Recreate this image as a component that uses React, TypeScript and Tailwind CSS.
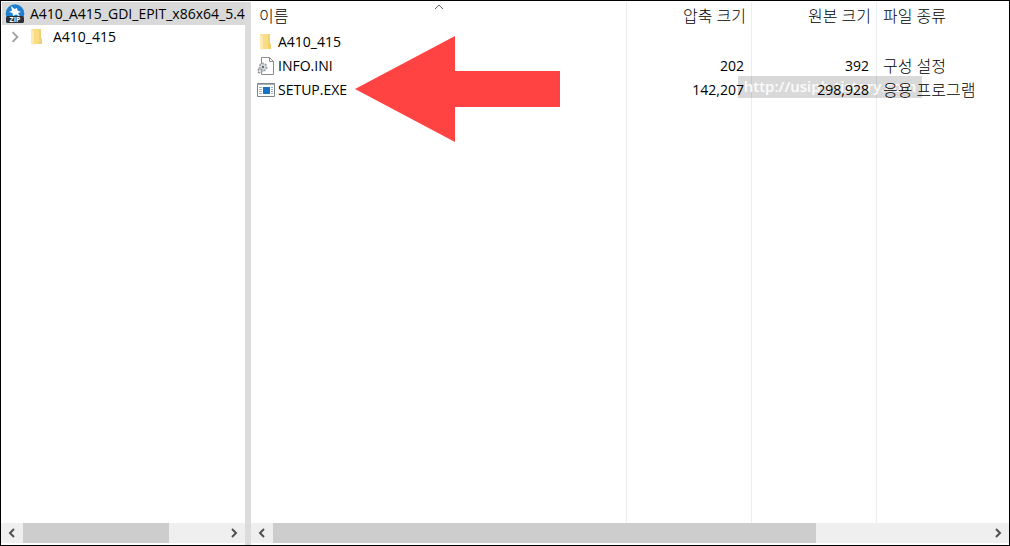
import { ReactNode } from "react";

type Entry = {
  name: string;
  packed: string;
  size: string;
  kind: string;
  icon: ReactNode;
};

function ZipIcon() {
  return (
    <svg width="20" height="20" viewBox="0 0 20 20" className="shrink-0">
      <circle cx="10" cy="9.5" r="9.3" fill="#1c7fd0" />
      <path d="M6 2l3.500 3L12 4l.5 2.500L16 8l-3 1 2 3.500-4-2L8 12l-.5-3L4 8l3-1.500z" fill="#fff" />
      <path d="M2 12h16l1 2v4l-1 1H2l-1-1v-4z" fill="#2b3036" />
      <text x="10" y="18" textAnchor="middle" fontSize="7" fontWeight="700" fill="#fff">ZIP</text>
    </svg>
  );
}

function FolderIcon() {
  return (
    <svg width="16" height="18" viewBox="0 0 16 18" className="shrink-0">
      <path d="M2 1h9v15H2z" fill="#f9dc86" />
      <path d="M2 1l3 2v14l-3-1z" fill="#fdeab0" />
      <path d="M10 1h2v9l1 1v5h-3z" fill="#f3d172" />
    </svg>
  );
}

function IniIcon() {
  return (
    <svg width="18" height="18" viewBox="0 0 18 18" className="shrink-0">
      <path d="M4.500 .5h8l4 4v13h-12z" fill="#fff" stroke="#8b8b8b" />
      <path d="M12.500 .5v4h4" fill="none" stroke="#8b8b8b" />
      <circle cx="6" cy="10" r="3.500" fill="#dfe3e6" stroke="#a0a6ab" strokeWidth="2" strokeDasharray="2 1" />
      <circle cx="3" cy="14" r="2" fill="#dfe3e6" stroke="#8d949a" strokeWidth="1.500" strokeDasharray="2 1" />
      <circle cx="6" cy="10" r="1.200" fill="#666" />
    </svg>
  );
}

function ExeIcon() {
  return (
    <svg width="18" height="14" viewBox="0 0 18 14" className="shrink-0">
      <path d="M.5 .5h17v13H.5z" fill="#fff" stroke="#7d8489" />
      <path d="M1 1h16v1H1z" fill="#a9b2b8" />
      <path d="M6 4h7v7H6z" fill="#1673c4" />
      <path d="M2 4.500h3M2 6.500h3M2 8.500h3M2 10.500h3M14 4.500h2M14 6.500h2M14 8.500h2M14 10.500h2" stroke="#9fb3c2" />
    </svg>
  );
}

function Chevron({ d, className }: { d: string; className: string }) {
  return (
    <svg viewBox="0 0 10 10" fill="none" stroke="currentColor" className={className}>
      <path d={d} />
    </svg>
  );
}

const LEFT = "M7 1L3 5l4 4";
const RIGHT = "M3 1l4 4-4 4";

function ScrollBar({ thumb }: { thumb: string }) {
  return (
    <div className="mb-[2px] flex h-5 shrink-0 bg-[#efefef] text-[#505050]">
      <button aria-label="Scroll left" className="flex w-[22px] items-center justify-center">
        <Chevron d={LEFT} className="size-[10px] stroke-2" />
      </button>
      <div className="flex-1">
        <div className={`h-full bg-[#cdcdcd] ${thumb}`} />
      </div>
      <button aria-label="Scroll right" className="flex w-[22px] items-center justify-center">
        <Chevron d={RIGHT} className="size-[10px] stroke-2" />
      </button>
    </div>
  );
}

const entries: Entry[] = [
  { name: "A410_415", packed: "", size: "", kind: "", icon: <FolderIcon /> },
  { name: "INFO.INI", packed: "202", size: "392", kind: "구성 설정", icon: <IniIcon /> },
  { name: "SETUP.EXE", packed: "142,207", size: "298,928", kind: "응용 프로그램", icon: <ExeIcon /> },
];

export default function App() {
  return (
    <div className="relative flex h-screen overflow-hidden border border-black bg-white pt-px font-['Open_Sans','Noto_Sans_CJK_KR',sans-serif] text-sm text-black">
      {/* TREE */}
      <aside className="flex w-[244px] shrink-0 flex-col overflow-hidden">
        <div className="ml-px flex h-[23px] shrink-0 items-center gap-[5px] whitespace-nowrap bg-[#d9d9d9] pl-[3px]">
          <ZipIcon />
          <span>A410_A415_GDI_EPIT_x86x64_5.4</span>
        </div>
        <div className="flex h-6 items-center pl-2">
          <button aria-label="Expand" className="mr-2 text-[#a0a0a0]">
            <Chevron d={RIGHT} className="size-3 stroke-[1.5]" />
          </button>
          <FolderIcon />
          <span className="ml-2">A410_415</span>
        </div>
        <div className="flex-1" />
        <ScrollBar thumb="w-[73%]" />
      </aside>

      <div className="w-[6px] shrink-0 bg-[#dcdcdc]" />

      {/* FILE LIST */}
      <main className="flex min-w-0 flex-1 flex-col">
        <div className="relative flex-1">
          {/* column rules run the full height of the list */}
          <div className="absolute inset-0 flex">
            <div className="flex-1 border-r border-[#e8edf0]" />
            <div className="w-[125px] border-r border-[#e8edf0]" />
            <div className="w-[125px] border-r border-[#e8edf0]" />
            <div className="w-[132px]" />
          </div>
          <Chevron d="M1 7l4-4 4 4" className="absolute left-[183px] top-0 size-[10px] text-[#606060]" />

          {/* WATERMARK */}
          <div className="absolute right-[87px] top-[74px] h-[22px] w-[184px] overflow-hidden whitespace-nowrap bg-black/15 text-center text-[15px] leading-5 font-semibold text-white/90">
            http://usiph.tistory.com
          </div>

          <table className="relative w-full table-fixed">
            <thead>
              <tr className="h-7 text-base">
                <th className="pl-2 text-left font-light">이름</th>
                <th className="w-[125px] pr-[6px] text-right font-light">압축 크기</th>
                <th className="w-[125px] pr-[6px] text-right font-light">원본 크기</th>
                <th className="w-[132px] pl-[6px] text-left font-light">파일 종류</th>
              </tr>
            </thead>
            <tbody>
              {entries.map((e) => (
                <tr key={e.name} className="h-6">
                  <td className="pl-[6px]">
                    <div className="flex items-center gap-[3px]">
                      <span className="flex w-[18px] justify-center">{e.icon}</span>
                      {e.name}
                    </div>
                  </td>
                  <td className="pr-2 text-right">{e.packed}</td>
                  <td className="pr-2 text-right">{e.size}</td>
                  <td className="pl-[6px] text-base font-light leading-6">{e.kind}</td>
                </tr>
              ))}
            </tbody>
          </table>
        </div>
        <ScrollBar thumb="w-[76%]" />
      </main>

      {/* POINTER ARROW */}
      <svg width="206" height="108" viewBox="0 0 206 108" className="absolute left-[354px] top-[34px]">
        <path d="M0 54L100 1v35h105v36H100v35z" fill="#ff4242" />
      </svg>
    </div>
  );
}
